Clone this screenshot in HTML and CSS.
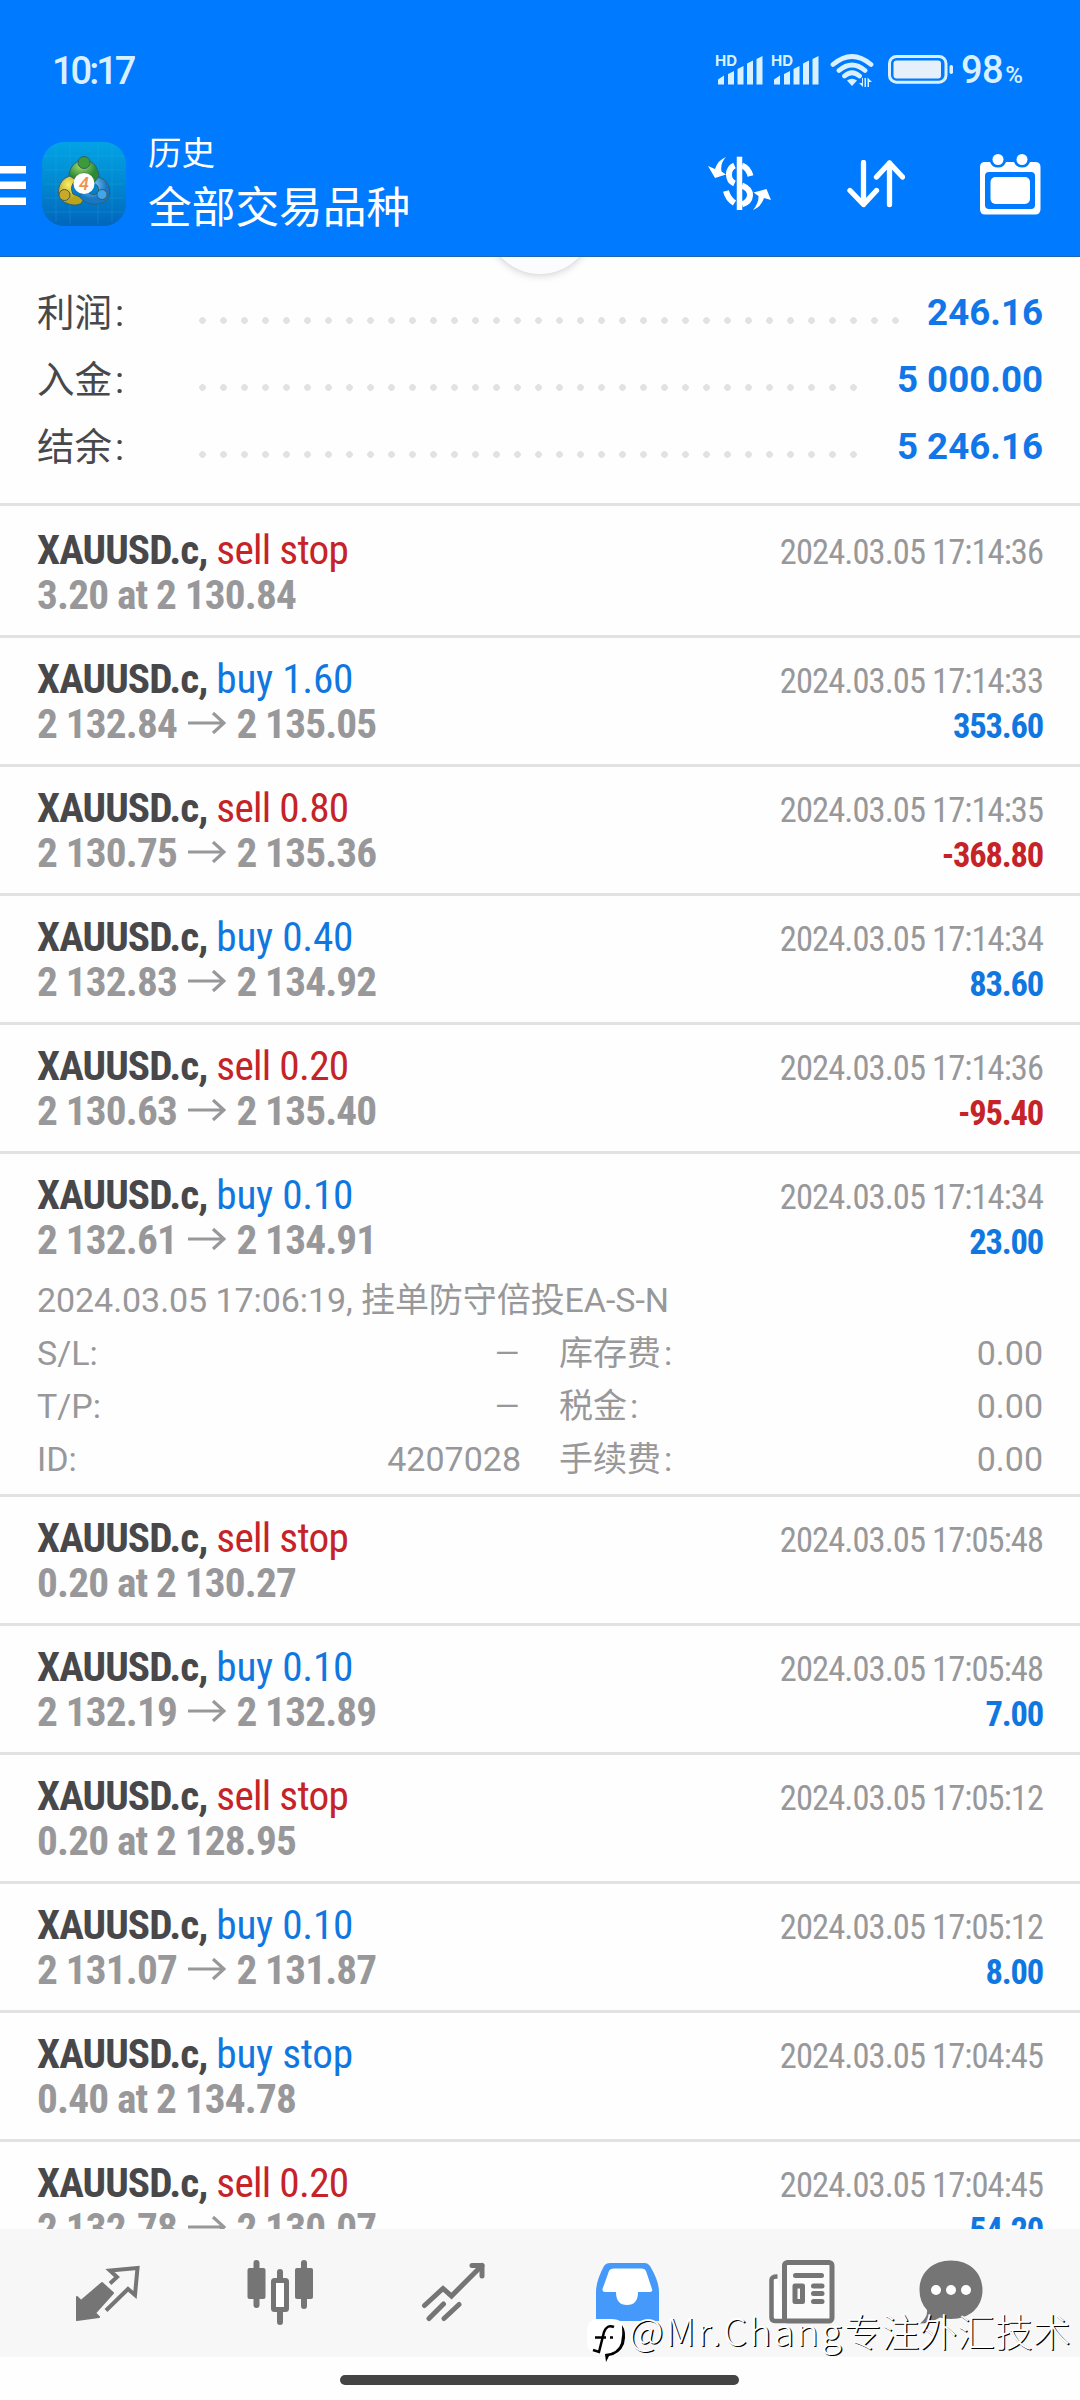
FILE: index.html
```html
<!DOCTYPE html>
<html lang="zh-CN">
<head>
<meta charset="utf-8">
<title>历史</title>
<link rel="stylesheet" href="styles.css">
</head>
<body>
<div class="screen">
  <header class="header">
    <div class="statusbar">
      <span class="clock">10:17</span>
      <svg class="status-icons" width="240" height="36" viewBox="715 52 240 36">
        <g fill="#d9f1ff">
          <text class="hd" x="715" y="66">HD</text>
          <path d="M718 84.500V79.500L724 75.500V84.500ZM728 84.500V74L734 71V84.500ZM737.500 84.500V69L743.500 66V84.500ZM747 84.500V63.500L753 60.500V84.500ZM756.500 84.500V59L762.500 56V84.500Z"/>
          <text class="hd" x="771" y="66">HD</text>
          <path d="M774 84.500V79.500L780 75.500V84.500ZM784 84.500V74L790 71V84.500ZM793.500 84.500V69L799.500 66V84.500ZM803 84.500V63.500L809 60.500V84.500ZM812.500 84.500V59L818.500 56V84.500Z"/>
          <path d="M852 86L847 80.500Q852 77 857 80.500Z"/>
          <path d="M862 78V83H859L863 87V78ZM864.500 78V87H866V78ZM867.500 87V77.500L872 82H869V87Z"/>
          <rect x="893.500" y="60.500" width="47.500" height="18" rx="3" fill="#e6f0fb"/>
          <rect x="949.500" y="65" width="3.500" height="9" rx="1.700"/>
        </g>
        <g fill="none" stroke="#d9f1ff" stroke-linecap="round">
          <path stroke-width="4.800" d="M833 64.500Q852 48.500 871 64.500M839 70.500Q852 59.500 865 70.500M844.500 76Q852 69.500 859.500 76"/>
          <rect x="889.500" y="56.500" width="56.500" height="25.700" rx="7" stroke-width="3"/>
        </g>
      </svg>
      <span class="battery">98<small>%</small></span>
    </div>
    <div class="toolbar">
      <svg class="menu" width="26" height="40" viewBox="0 0 26 40"><path fill="#fff" d="M0 1H26V8.500H0ZM0 16.500H26V24H0ZM0 32.500H26V40H0Z"/></svg>
      <svg class="logo" width="84" height="84" viewBox="0 0 84 84">
        <defs>
          <linearGradient id="sky" x1="0" y1="0" x2="0" y2="1"><stop offset="0" stop-color="#02a3e6"/><stop offset=".5" stop-color="#0188cf"/><stop offset="1" stop-color="#0165bd"/></linearGradient>
          <radialGradient id="gr" cx=".4" cy=".3"><stop offset="0" stop-color="#a5d96a"/><stop offset="1" stop-color="#2a8a35"/></radialGradient>
          <radialGradient id="ye" cx=".4" cy=".3"><stop offset="0" stop-color="#fbee6a"/><stop offset="1" stop-color="#b9a41c"/></radialGradient>
          <radialGradient id="bl" cx=".4" cy=".3"><stop offset="0" stop-color="#8fd4fa"/><stop offset="1" stop-color="#1877c4"/></radialGradient>
        </defs>
        <rect width="84" height="84" rx="22" fill="url(#sky)"/>
        <path d="M14 4V80M28 2V82M56 2V82M70 4V80M2 14H82M2 28H82M2 42H82M2 56H82M2 70H82" stroke="#39b4e8" stroke-opacity=".22"/>
        <g stroke="#31606b" stroke-width="1">
          <path fill="url(#gr)" d="M42 17C52 19 58 27 57 39L50 41Q48 31 42 31T34 41L27 37C26 27 32 19 42 17Z"/>
          <path fill="url(#ye)" d="M28 34C14 38 13 57 24 61C33 65 42 63 41 56L31 52Q27 44 34 38Z"/>
          <path fill="url(#bl)" d="M56 35C68 38 70 51 65 58C57 65 43 63 37 54L44 49Q51 55 56 51Q58 44 52 41Z"/>
          <circle cx="42" cy="20.500" r="6" fill="#3d9a38"/><circle cx="22.500" cy="53" r="5.500" fill="#c9a92a"/><circle cx="60" cy="52.500" r="5" fill="#43a5e8"/>
        </g>
        <circle cx="42" cy="41.500" r="10.500" fill="#fff"/>
        <text class="logo-mark" x="42" y="48">4</text>
      </svg>
      <div class="titles"><span class="subtitle">历史</span><span class="title">全部交易品种</span></div>
      <div class="actions">
        <svg width="64" height="56" viewBox="708 156 64 56" fill="none" stroke="#fff">
          <path stroke-width="5.500" d="M739.500 156.700V210"/>
          <path stroke-width="6" d="M734.500 165.500Q729 168 729 174.500Q729 181 734.500 183.500M742 165.500Q748.500 168 750.500 176M742 185.500Q750.500 189 750 195.500Q749.500 202 742 204.500M726 191Q728 199 734.500 203"/>
          <path fill="#fff" stroke="none" d="M726 157Q718 160 715 169L708 166L715 178L726 174.500L721.500 171.500Q720 163 726 157ZM753 210Q761 207 764 198L771 200L766.500 189L753.500 192.500L758.500 196Q759 203 753 210Z"/>
        </svg>
        <svg width="58" height="48" viewBox="846 160 58 48" fill="none" stroke="#fff" stroke-width="5.300" stroke-linecap="round" stroke-linejoin="round"><path d="M862.500 162.500V204M849 190.500L862.500 204.500L875.500 190.500M888.500 204.500V163M875.500 177L888.500 163L901.500 177"/></svg>
        <svg width="61" height="62" viewBox="980 151 61 62">
          <path fill="#fff" fill-rule="evenodd" d="M985 160H990Q992 165.500 998 165.500T1006 160H1014Q1016 165.500 1022 165.500T1030 160H1035Q1040.500 160 1040.500 165V207Q1040.500 212.500 1035 212.500H985Q980 212.500 980 207V165Q980 160 985 160ZM989 170Q985 170 985 174V203Q985 207 989 207H1031Q1035 207 1035 203V174Q1035 170 1031 170Z"/>
          <rect x="990.500" y="175" width="39.500" height="27" rx="5" fill="#fff"/><circle cx="998" cy="157.500" r="5.500" fill="#fff"/><circle cx="1022" cy="157.500" r="5.500" fill="#fff"/>
        </svg>
      </div>
    </div>
  </header>
  <main class="content">
    <div class="pull"></div>
    <dl class="summary">
      <div class="sum"><dt>利润<i>:</i></dt><dd class="dots"></dd><dd class="amount">246.16</dd></div>
      <div class="sum"><dt>入金<i>:</i></dt><dd class="dots short"></dd><dd class="amount">5 000.00</dd></div>
      <div class="sum"><dt>结余<i>:</i></dt><dd class="dots short"></dd><dd class="amount">5 246.16</dd></div>
    </dl>
    <ul class="deals">
      <li class="deal"><p><b>XAUUSD.c,</b> <span class="sell">sell stop</span></p><time>2024.03.05 17:14:36</time><p class="price">3.20 at 2 130.84</p></li>
      <li class="deal"><p><b>XAUUSD.c,</b> <span class="buy">buy 1.60</span></p><time>2024.03.05 17:14:33</time><p class="price">2 132.84 <svg class="arrow" viewBox="0 0 38 22"><path d="M0 11H36M25 1L36 11L25 21"/></svg> 2 135.05</p><b class="profit buy">353.60</b></li>
      <li class="deal"><p><b>XAUUSD.c,</b> <span class="sell">sell 0.80</span></p><time>2024.03.05 17:14:35</time><p class="price">2 130.75 <svg class="arrow" viewBox="0 0 38 22"><path d="M0 11H36M25 1L36 11L25 21"/></svg> 2 135.36</p><b class="profit sell">-368.80</b></li>
      <li class="deal"><p><b>XAUUSD.c,</b> <span class="buy">buy 0.40</span></p><time>2024.03.05 17:14:34</time><p class="price">2 132.83 <svg class="arrow" viewBox="0 0 38 22"><path d="M0 11H36M25 1L36 11L25 21"/></svg> 2 134.92</p><b class="profit buy">83.60</b></li>
      <li class="deal"><p><b>XAUUSD.c,</b> <span class="sell">sell 0.20</span></p><time>2024.03.05 17:14:36</time><p class="price">2 130.63 <svg class="arrow" viewBox="0 0 38 22"><path d="M0 11H36M25 1L36 11L25 21"/></svg> 2 135.40</p><b class="profit sell">-95.40</b></li>
      <li class="deal open"><p><b>XAUUSD.c,</b> <span class="buy">buy 0.10</span></p><time>2024.03.05 17:14:34</time><p class="price">2 132.61 <svg class="arrow" viewBox="0 0 38 22"><path d="M0 11H36M25 1L36 11L25 21"/></svg> 2 134.91</p><b class="profit buy">23.00</b>
        <div class="details">
          <p class="note">2024.03.05 17:06:19, 挂单防守倍投EA-S-N</p>
          <span>S/L:</span><span class="num dash">–</span><span class="fee">库存费<i>:</i></span><span class="num">0.00</span>
          <span>T/P:</span><span class="num dash">–</span><span class="fee">税金<i>:</i></span><span class="num">0.00</span>
          <span>ID:</span><span class="num">4207028</span><span class="fee">手续费<i>:</i></span><span class="num">0.00</span>
        </div>
      </li>
      <li class="deal"><p><b>XAUUSD.c,</b> <span class="sell">sell stop</span></p><time>2024.03.05 17:05:48</time><p class="price">0.20 at 2 130.27</p></li>
      <li class="deal"><p><b>XAUUSD.c,</b> <span class="buy">buy 0.10</span></p><time>2024.03.05 17:05:48</time><p class="price">2 132.19 <svg class="arrow" viewBox="0 0 38 22"><path d="M0 11H36M25 1L36 11L25 21"/></svg> 2 132.89</p><b class="profit buy">7.00</b></li>
      <li class="deal"><p><b>XAUUSD.c,</b> <span class="sell">sell stop</span></p><time>2024.03.05 17:05:12</time><p class="price">0.20 at 2 128.95</p></li>
      <li class="deal"><p><b>XAUUSD.c,</b> <span class="buy">buy 0.10</span></p><time>2024.03.05 17:05:12</time><p class="price">2 131.07 <svg class="arrow" viewBox="0 0 38 22"><path d="M0 11H36M25 1L36 11L25 21"/></svg> 2 131.87</p><b class="profit buy">8.00</b></li>
      <li class="deal"><p><b>XAUUSD.c,</b> <span class="buy">buy stop</span></p><time>2024.03.05 17:04:45</time><p class="price">0.40 at 2 134.78</p></li>
      <li class="deal"><p><b>XAUUSD.c,</b> <span class="sell">sell 0.20</span></p><time>2024.03.05 17:04:45</time><p class="price">2 132.78 <svg class="arrow" viewBox="0 0 38 22"><path d="M0 11H36M25 1L36 11L25 21"/></svg> 2 130.07</p><b class="profit buy">54.20</b></li>
    </ul>
  </main>
  <nav class="tabs">
    <svg width="66" height="66" viewBox="75 2260 66 66">
      <path fill="#757575" stroke="#757575" stroke-width="2" stroke-linejoin="round" d="M102 2283L113 2293L95 2313L99 2317L77 2320V2297L81 2301Z"/>
      <path fill="none" stroke="#757575" stroke-width="4" d="M110 2283.500L117 2277L110 2270.500L137.500 2268L135 2295L128 2289L106 2310.500"/>
    </svg>
    <svg width="66" height="66" viewBox="247 2260 66 66">
      <path fill="none" stroke="#757575" stroke-width="6" stroke-linecap="round" d="M256.500 2263V2305M304 2263V2306M280 2272V2281M280 2309V2322"/>
      <rect x="247.500" y="2268" width="18" height="31" rx="2" fill="#757575"/><rect x="295" y="2268" width="18" height="31" rx="2" fill="#757575"/>
      <rect x="273.500" y="2280.500" width="13" height="29" rx="1" fill="#fff" stroke="#757575" stroke-width="5"/>
    </svg>
    <svg width="66" height="66" viewBox="420 2260 66 66" fill="none" stroke="#757575" stroke-width="5" stroke-linecap="round"><path d="M424.500 2305.500L443 2288.500L451.500 2296L482 2265.500M429 2318.500L443.500 2304M444 2318.500L459 2304.500"/><path stroke-linejoin="round" d="M472 2265.500H482V2276"/></svg>
    <svg width="66" height="66" viewBox="594 2260 66 66">
      <path fill="#fff" d="M609 2266H646L655 2292L640 2308H614L600 2292Z"/>
      <path fill="#4599fb" fill-rule="evenodd" d="M610 2263H645Q648 2263 650 2266Q659 2281 659 2292V2321H596V2292Q596 2281 604 2266Q606 2263 610 2263ZM614 2268.500Q610 2268.500 609 2271L602.500 2289Q602 2292 605 2292H616Q616 2305 627 2305T638 2292H650Q653 2292 652 2289L646 2271Q645 2268.500 642 2268.500Z"/>
    </svg>
    <svg width="68" height="66" viewBox="768 2260 68 66" fill="none" stroke="#757575" stroke-width="5" stroke-linecap="round">
      <path fill="#fff" d="M785 2321H775Q771.500 2321 771.500 2317V2280Q771.500 2276.500 777.500 2276.500" stroke-linecap="butt" stroke-width="4.500"/><rect x="784.500" y="2262.500" width="47.500" height="58.500" rx="3" fill="#fbfbfb"/><path d="M795.500 2275.500H821.500M813.500 2286H822M813.500 2293.500H822M813.500 2301.500H822"/><rect x="795" y="2286" width="7.500" height="15.500" stroke-linejoin="round"/>
    </svg>
    <svg width="66" height="66" viewBox="918 2260 66 66"><path fill="#757575" d="M951 2260.500C970 2260.500 982.500 2273 982.500 2290S970 2319 951 2319Q945 2319 940 2317.500Q930 2323.500 920 2323.500Q928 2317 927 2310Q919.500 2302 919.500 2290C919.500 2273 932 2260.500 951 2260.500Z"/><g fill="#fff"><circle cx="936" cy="2290" r="5"/><circle cx="951" cy="2290" r="5"/><circle cx="966" cy="2290" r="5"/></g></svg>
  </nav>
  <div class="home"><span></span></div>
  <div class="watermark">
    <svg width="40" height="46" viewBox="587 2317 40 46"><path fill="#fff" d="M597 2319H611Q625 2319 625 2331V2341Q623 2354 607 2358L603 2354H597Q587 2352 587 2342V2330Q588 2319 597 2319Z"/><path fill="none" stroke="#000" stroke-width="2.500" d="M614 2327Q607 2324 604 2332L599 2352L593 2350M595 2337.500H606M610 2337.500H613"/><path d="M622 2325Q627 2332 624 2344Q620 2354 609 2356L606 2362L605 2354Q618 2353 621 2343Q623 2334 622 2325Z"/></svg>
    <span><span class="handle">@Mr.Chang</span>专注外汇技术</span>
  </div>
</div>
</body>
</html>
```
FILE: styles.css
```css
* { box-sizing: border-box; }
body { margin: 0; background: #fefefe; font-family: Roboto, "Noto Sans CJK SC", sans-serif; }
p, dl, dd, ul { margin: 0; padding: 0; }
svg { display: block; flex: none; }
.screen { position: relative; display: flex; flex-direction: column; width: 1080px; height: 2400px; overflow: hidden; background: #fefefe; }

.header { position: relative; z-index: 1; height: 257px; flex: none; background: #007aff; border-bottom: 1px solid #1c66b4; color: #fff; }
.statusbar { display: flex; align-items: center; height: 88px; padding: 52px 48px 0 52px; color: #d9f1ff; font-weight: 500; }
.clock { padding-top: 2px; font-size: 38px; line-height: 36px; margin-right: auto; letter-spacing: -3px; }
.hd { font: 700 15px Inter, sans-serif; }
.battery { display: flex; align-items: baseline; width: 71px; margin-left: 6px; padding-top: 5px; font-size: 38px; line-height: 36px; white-space: nowrap; letter-spacing: -.5px; }
.battery small { margin-left: 2px; font-size: 24px; }
.toolbar { display: flex; align-items: center; height: 168px; padding: 28px 39px 4px 0; }
.toolbar .menu { margin: 2px 16px 0 0; }
.logo { margin-right: 22px; }
.logo-mark { font: italic 500 18px Roboto, sans-serif; fill: #f0924a; text-anchor: middle; }
.titles { display: flex; flex-direction: column; margin-bottom: 8px; font-family: "Noto Sans CJK SC", sans-serif; font-weight: 400; }
.subtitle { font-size: 33.500px; line-height: 48px; }
.title { font-size: 43.700px; line-height: 59px; }
.actions { display: flex; align-items: center; gap: 75px; margin-left: auto; }

.content { position: relative; height: 1972px; flex: none; overflow: hidden; }
.pull { position: absolute; left: 487px; top: -89px; width: 106px; height: 106px; border-radius: 50%; background: #fafcff; box-shadow: 0 1px 8px rgba(0,0,0,.2); }
.summary { height: 249px; padding: 23px 37px 0; border-bottom: 3px solid #e2e2e2; }
.sum { display: flex; height: 67px; align-items: center; font-size: 36.700px; color: #48484b; }
.sum dt { width: 154px; margin-top: -8px; font-size: 37.500px; }
.sum dt i { margin-left: 3px; }
i { font-style: normal; }
.dots { width: 714px; height: 7px; margin-top: 14px; background: radial-gradient(circle at 11.500px 3.500px, #e2e2e2 3px, transparent 3.700px) 0 0 / 21px 7px; }
.dots.short { width: 672px; }
.amount { margin: -2px 0 0 auto; font-weight: 700; color: #1177e8; }

.deals { list-style: none; padding-top: 3px; }
.deal { display: grid; grid-template-columns: 1fr auto; grid-auto-rows: 45px; height: 129px; padding: 19px 37px 0; border-bottom: 3px solid #e2e2e2; font-family: Roboto, sans-serif; font-stretch: 75%; font-size: 41.250px; line-height: 45px; letter-spacing: -.7px; white-space: nowrap; color: #48484b; }
.deal p > b { letter-spacing: -.9px; }
.deal time { font-size: 34.500px; line-height: 48px; letter-spacing: -.92px; color: #98989a; }
.sell { color: #c62328; }
.buy { color: #1177e0; letter-spacing: -.25px; }
.deal .price { font-weight: 700; color: #98989a; letter-spacing: -.82px; }
.deal .profit { font-size: 34.500px; line-height: 48px; letter-spacing: -1.200px; text-align: right; }
.arrow { display: inline-block; width: 38px; height: 22px; margin: 0 2px; vertical-align: 4px; fill: none; stroke: #98989a; stroke-width: 3.200; }
.deal.open { height: 343px; grid-template-rows: 45px 45px auto; }
.details { grid-column: 1 / 3; display: grid; grid-template-columns: 160px 324px 163px 1fr; grid-auto-rows: 53px; margin-top: 11px; font-family: Roboto, "Noto Sans CJK SC", sans-serif; font-stretch: 100%; font-weight: 400; font-size: 34px; line-height: 53px; letter-spacing: 0; color: #98989a; }
.details i { margin-left: 3px; }
.note { grid-column: 1 / 5; letter-spacing: -.07px; }
.num { text-align: right; }
.dash { font-size: 42px; font-weight: 300; }
.fee { padding-left: 38px; }

.tabs { display: grid; grid-template-columns: 173px 172px 174px 174px 175px 124px; justify-items: center; align-content: center; height: 128px; flex: none; padding: 0 67px 0 21px; background: #f7f7f7; }
.home { display: flex; justify-content: center; padding: 18px 1px 0 0; }
.home span { width: 399px; height: 10px; border-radius: 5px; background: #444; }
.watermark { position: absolute; left: 587px; top: 2305px; display: flex; align-items: flex-start; gap: 2px; font: 300 37.800px/50px "Noto Sans CJK SC", sans-serif; color: #fff; white-space: nowrap; text-shadow: 1.200px 1.200px .5px #000; }
.watermark svg { margin-top: 12px; }
.handle { letter-spacing: 2.200px; }
```
